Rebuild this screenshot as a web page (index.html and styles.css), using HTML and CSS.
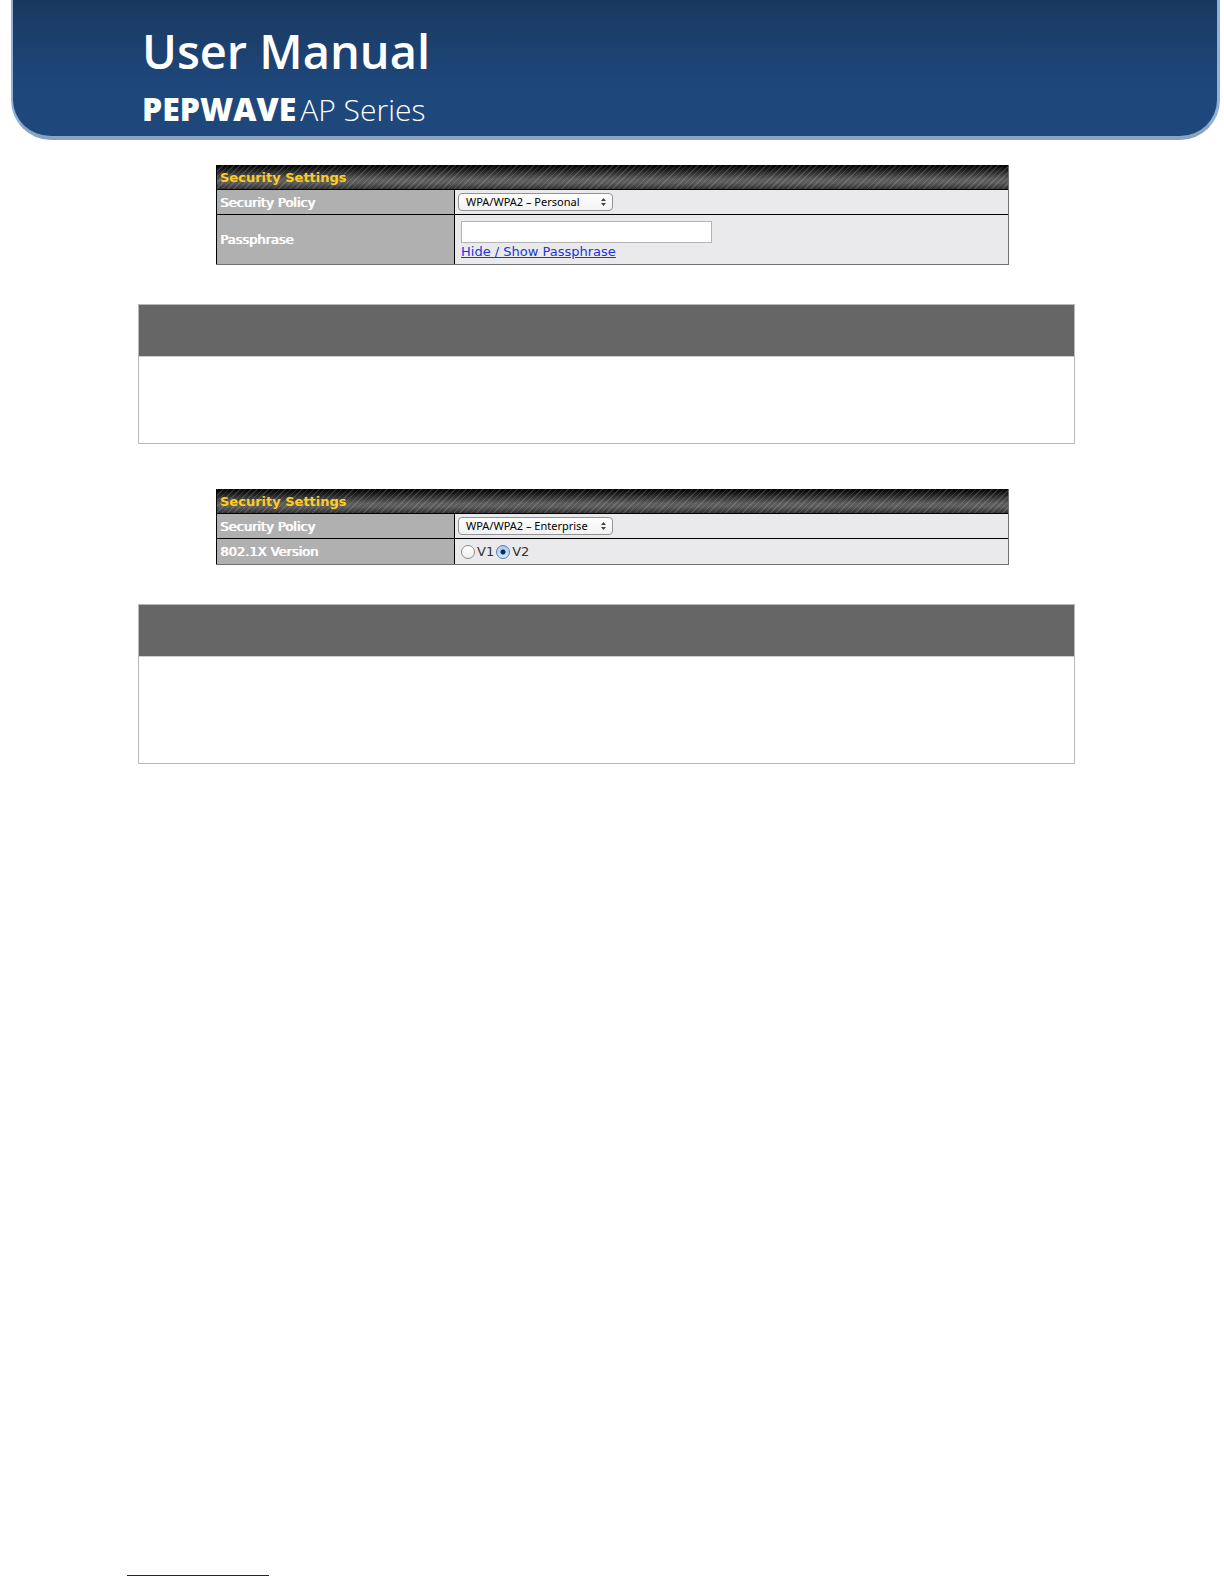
FILE: index.html
```html
<!DOCTYPE html>
<html lang="en">
<head>
<meta charset="utf-8">
<title>User Manual - PEPWAVE AP Series</title>
<link rel="stylesheet" href="styles.css">
</head>
<body>
<header class="banner">
  <h1 class="banner-title">User Manual</h1>
  <p class="banner-product"><strong>PEPWAVE</strong><span>AP Series</span></p>
</header>
<main class="content">
  <table class="settings">
    <colgroup><col class="col-label"><col></colgroup>
    <thead><tr><th colspan="2" scope="colgroup">Security Settings</th></tr></thead>
    <tbody>
      <tr>
        <th scope="row"><label for="policy-personal">Security Policy</label></th>
        <td><select id="policy-personal" class="policy"><option>WPA/WPA2 – Personal</option><option>WPA/WPA2 – Enterprise</option></select></td>
      </tr>
      <tr>
        <th scope="row"><label for="passphrase">Passphrase</label></th>
        <td><div class="passphrase"><input id="passphrase" type="text"><a href="#passphrase">Hide / Show Passphrase</a></div></td>
      </tr>
    </tbody>
  </table>
  <section class="panel">
    <div class="panel-head"></div>
    <div class="panel-body"></div>
  </section>
  <table class="settings">
    <colgroup><col class="col-label"><col></colgroup>
    <thead><tr><th colspan="2" scope="colgroup">Security Settings</th></tr></thead>
    <tbody>
      <tr>
        <th scope="row"><label for="policy-enterprise">Security Policy</label></th>
        <td><select id="policy-enterprise" class="policy"><option>WPA/WPA2 – Enterprise</option><option>WPA/WPA2 – Personal</option></select></td>
      </tr>
      <tr>
        <th scope="row">802.1X Version</th>
        <td><div class="versions"><label><input type="radio" name="version">V1</label><label><input type="radio" name="version" checked>V2</label></div></td>
      </tr>
    </tbody>
  </table>
  <section class="panel panel-tall">
    <div class="panel-head"></div>
    <div class="panel-body"></div>
  </section>
</main>
<footer class="footer"><a class="footer-link" href="#" aria-label="Website"></a></footer>
</body>
</html>
```
FILE: styles.css
```css
* { box-sizing: border-box; }

body {
  margin: 0;
  min-height: 100vh;
  display: flex;
  flex-direction: column;
  background: #fff;
  font-family: "DejaVu Sans", Verdana, sans-serif;
  font-size: 13px;
  color: #333;
}

.banner {
  margin: 0 4px 0 11px;
  padding: 19px 129px 11px;
  border: solid #8fb0d8;
  border-width: 0 3px 4px 2px;
  border-bottom-color: #8aa3c2;
  border-radius: 0 0 40px 40px;
  background: linear-gradient(#1a385f, #1c416f 35%, #1e477c 65%, #1e477c);
  color: #fff;
  font-family: "Open Sans", "Noto Sans", sans-serif;
}

.banner-title {
  margin: 0;
  font-size: 47px;
  line-height: 64px;
  font-weight: 600;
}

.banner-product {
  display: flex;
  align-items: baseline;
  gap: 4px;
  margin: 0;
  padding-top: 10px;
  font-size: 30px;
  line-height: 31px;
  font-weight: 300;
}

.banner-product strong {
  font-size: 32px;
  font-weight: 800;
}

.content {
  padding: 25px 149px 0 138px;
}

.settings {
  width: calc(100% - 144px);
  margin-left: 78px;
  table-layout: fixed;
  border-collapse: separate;
  border-spacing: 0;
  border: solid #6f6f6f;
  border-width: 0 1px 1px 0;
}

.col-label { width: 238px; }

.settings th {
  padding: 0 3px;
  text-align: left;
  border-left: 1px solid #000;
}

.settings thead th {
  height: 25px;
  border-bottom: 1px solid #000;
  background:
    repeating-linear-gradient(135deg, rgba(255,255,255,0.14) 0 1px, transparent 1px 4px),
    linear-gradient(#000, #1c1c1c 20%, #5c5c5c 60%, #5a5a5a 75%, #303030);
  color: #fc2;
}

.settings tbody th {
  background: #b0b0b0;
  color: #fff;
  font-weight: 400;
  text-shadow: 1px 0 #fff;
}

.settings td {
  height: 25px;
  padding: 0 3px;
  border-left: 1px solid #000;
  background: #eaeaec;
}

.settings tbody tr:first-child > * { border-bottom: 1px solid #000; }

.policy {
  display: block;
  appearance: none;
  width: 155px;
  height: 18px;
  padding: 0 7px;
  border: 1px solid #929292;
  border-radius: 4px;
  background:
    url("data:image/svg+xml,%3Csvg xmlns='http://www.w3.org/2000/svg' width='5' height='8'%3E%3Cpath d='M0 3L2.5 0L5 3zM0 5h5L2.5 8z' fill='%23444'/%3E%3C/svg%3E") no-repeat right 6px center,
    linear-gradient(#fff, #f2f2f2);
  color: #000;
  font: 11px/16px "Noto Sans", sans-serif;
}

.passphrase {
  display: flex;
  flex-direction: column;
  align-items: flex-start;
  padding: 6px 3px 3px;
}

.passphrase input {
  width: 251px;
  height: 22px;
  border: 1px solid #b4b4b4;
  background: #fff;
}

.passphrase a {
  color: #1a35d8;
  line-height: 18px;
}

.versions {
  display: flex;
  gap: 2px;
  padding-left: 3px;
}

.versions label {
  display: flex;
  align-items: center;
  gap: 2px;
}

.versions input {
  appearance: none;
  width: 14px;
  height: 14px;
  margin: 0;
  border: 1px solid #8c8c8c;
  border-radius: 50%;
  background: linear-gradient(#fff, #eee);
}

.versions input:checked {
  border-color: #5c7fae;
  background: radial-gradient(circle, #0b2a50 2px, transparent 3px), linear-gradient(#a9cbf0, #cdeaff);
}

.panel {
  margin: 39px 0 45px;
  border: 1px solid #b8b8b8;
}

.panel-head {
  height: 52px;
  border-bottom: 1px solid #ccc;
  background: #666;
}

.panel-body { height: 86px; }

.panel-tall .panel-body { height: 106px; }

.footer {
  margin-top: auto;
  padding: 0 127px 8px;
}

.footer-link {
  display: block;
  width: 142px;
  height: 16px;
  border-bottom: 1px solid #1a1a80;
}
```
